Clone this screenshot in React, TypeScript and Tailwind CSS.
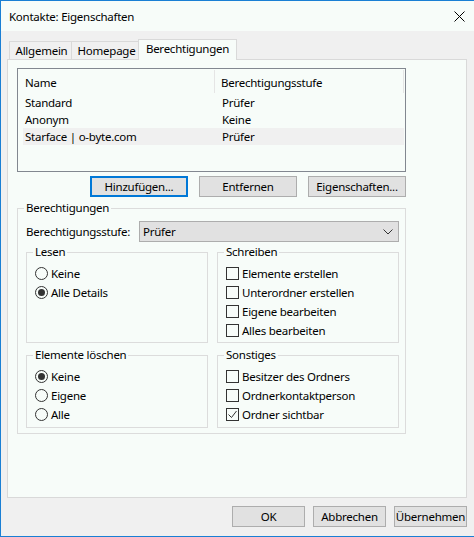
import React from "react";

function Radio({ checked, label }: { checked?: boolean; label: string }) {
  return (
    <div className="flex items-center h-[19px]">
      <span className="w-[13px] h-[13px] rounded-full border border-[#333333] flex items-center justify-center shrink-0">
        {checked && <span className="w-[7px] h-[7px] rounded-full bg-[#333333]" />}
      </span>
      <span className="ml-[3px]">{label}</span>
    </div>
  );
}

function Check({ checked, label }: { checked?: boolean; label: string }) {
  return (
    <div className="flex items-center h-[19px]">
      <span className="w-[13px] h-[13px] border border-[#333333] flex items-center justify-center shrink-0">
        {checked && (
          <svg width="11" height="11" viewBox="0 0 11 11">
            <path d="M1.5 5.5 L4.5 8.5 L9.5 2" fill="none" stroke="#333333" strokeWidth="1" />
          </svg>
        )}
      </span>
      <span className="ml-[3px]">{label}</span>
    </div>
  );
}

function SubGroup({ title, children, rows }: { title: string; children: React.ReactNode; rows: string }) {
  return (
    <fieldset className={"border border-[#dcdcdc] pl-[8px] pr-[4px] " + rows}>
      <legend className="-ml-[2px] px-[2px] leading-[16px]">{title}</legend>
      {children}
    </fieldset>
  );
}

function Btn({ label, focus, w }: { label: string; focus?: boolean; w: string }) {
  return (
    <button
      className={
        (focus ? "border-2 border-[#0078d7] " : "border border-[#adadad] ") +
        "h-[21px] bg-[#e1e1e1] flex items-center justify-center leading-none " +
        w
      }
    >
      {label}
    </button>
  );
}

export default function App() {
  return (
    <div className="w-[474px] h-[537px] bg-[#f0f0f0] border-l border-t border-b border-[#1a7fd4] flex flex-col text-[11.5px] text-black font-['Noto_Sans',sans-serif] tracking-[-0.25px] overflow-hidden">
      {/* Title bar */}
      <div className="h-[30px] bg-[#f7fcf9] flex items-center justify-between pl-[8px] pr-[9px] shrink-0">
        <span className="pt-[2px]">Kontakte: Eigenschaften</span>
        <svg width="11" height="11" viewBox="0 0 11 11" className="mt-[1px]">
          <path d="M0.5 0.5 L10.5 10.5 M10.5 0.5 L0.5 10.5" stroke="#000" strokeWidth="1" />
        </svg>
      </div>

      {/* Body */}
      <div className="flex-1 flex flex-col pl-[6px] pr-[7px]">
        {/* Tabs */}
        <div className="pt-[8px] shrink-0">
          <div className="flex items-end h-[20px] ml-[2px]">
            <div className="w-[62px] h-[18px] border-l border-t border-[#d9d9d9] bg-[#f0f0f0] flex items-center justify-center pl-[2px]">
              Allgemein
            </div>
            <div className="w-[67px] h-[18px] border-l border-t border-[#d9d9d9] bg-[#f0f0f0] flex items-center justify-center pl-[3px]">
              Homepage
            </div>
            <div className="relative z-10 -mb-px w-[99px] h-[21px] border-l border-t border-r border-[#d9d9d9] bg-[#f7fcf9] flex items-center justify-center pb-[2px]">
              Berechtigungen
            </div>
          </div>
        </div>

        {/* Panel */}
        <div className="flex-1 border border-[#d9d9d9] bg-[#f7fcf9] pt-[8px] pl-[9px] pr-[60px]">
          {/* List view */}
          <div className="h-[104px] w-[389px] border border-[#828790] bg-[#f7fcf9] pl-[5px]">
            <div className="flex h-[25px]">
              <div className="w-[192px] border-r border-[#e5e5e5] my-px pl-[2px] flex items-center pt-[2px]">Name</div>
              <div className="w-[189px] border-r border-[#e5e5e5] my-px pl-[6px] flex items-center pt-[2px]">Berechtigungsstufe</div>
            </div>
            {[
              ["Standard", "Prüfer", false],
              ["Anonym", "Keine", false],
              ["Starface | o-byte.com", "Prüfer", true],
            ].map(([n, p, sel]) => (
              <div
                key={n as string}
                className={"flex h-[17px] w-[381px] items-center " + (sel ? "bg-[#f0f0f0]" : "")}
              >
                <div className="w-[192px] pl-[2px]">{n}</div>
                <div className="pl-[7px]">{p}</div>
              </div>
            ))}
          </div>

          {/* Buttons */}
          <div className="w-[389px] flex justify-end gap-[11px] mt-[4px]">
            <Btn label="Hinzufügen..." focus w="w-[98px]" />
            <Btn label="Entfernen" w="w-[98px]" />
            <Btn label="Eigenschaften..." w="w-[98px]" />
          </div>

          {/* Berechtigungen group */}
          <fieldset className="w-[389px] mt-[3px] border border-[#dcdcdc] pl-[8px] pr-[6px] pb-[5px]">
            <legend className="-ml-[2px] px-[2px] leading-[16px]">Berechtigungen</legend>
            <div className="flex items-center mt-[5px]">
              <div className="w-[113px]">Berechtigungsstufe:</div>
              <div className="flex-1 h-[21px] bg-[#e1e1e1] border border-[#adadad] flex items-center justify-between pl-[3px] pr-[5px]">
                <span>Prüfer</span>
                <svg width="10" height="6" viewBox="0 0 10 6">
                  <path d="M0.5 0.5 L5 5 L9.5 0.5" fill="none" stroke="#333" strokeWidth="1" />
                </svg>
              </div>
            </div>

            <div className="grid grid-cols-2 gap-x-[9px] mt-[2px]">
              <SubGroup title="Lesen" rows="pt-[4px] pb-[2px]">
                <Radio label="Keine" />
                <Radio label="Alle Details" checked />
              </SubGroup>
              <SubGroup title="Schreiben" rows="pt-[4px] pb-[2px]">
                <Check label="Elemente erstellen" />
                <Check label="Unterordner erstellen" />
                <Check label="Eigene bearbeiten" />
                <Check label="Alles bearbeiten" />
              </SubGroup>
            </div>
            <div className="grid grid-cols-2 gap-x-[9px] mt-[4px]">
              <SubGroup title="Elemente löschen" rows="pt-[4px] pb-[3px]">
                <Radio label="Keine" checked />
                <Radio label="Eigene" />
                <Radio label="Alle" />
              </SubGroup>
              <SubGroup title="Sonstiges" rows="pt-[4px] pb-[3px]">
                <Check label="Besitzer des Ordners" />
                <Check label="Ordnerkontaktperson" />
                <Check label="Ordner sichtbar" checked />
              </SubGroup>
            </div>
          </fieldset>
        </div>

        {/* Bottom buttons */}
        <div className="flex justify-end gap-[8px] mt-[8px] mb-[9px] shrink-0">
          <Btn label="OK" w="w-[73px]" />
          <Btn label="Abbrechen" w="w-[73px]" />
          <Btn label="Übernehmen" w="w-[73px]" />
        </div>
      </div>
    </div>
  );
}
